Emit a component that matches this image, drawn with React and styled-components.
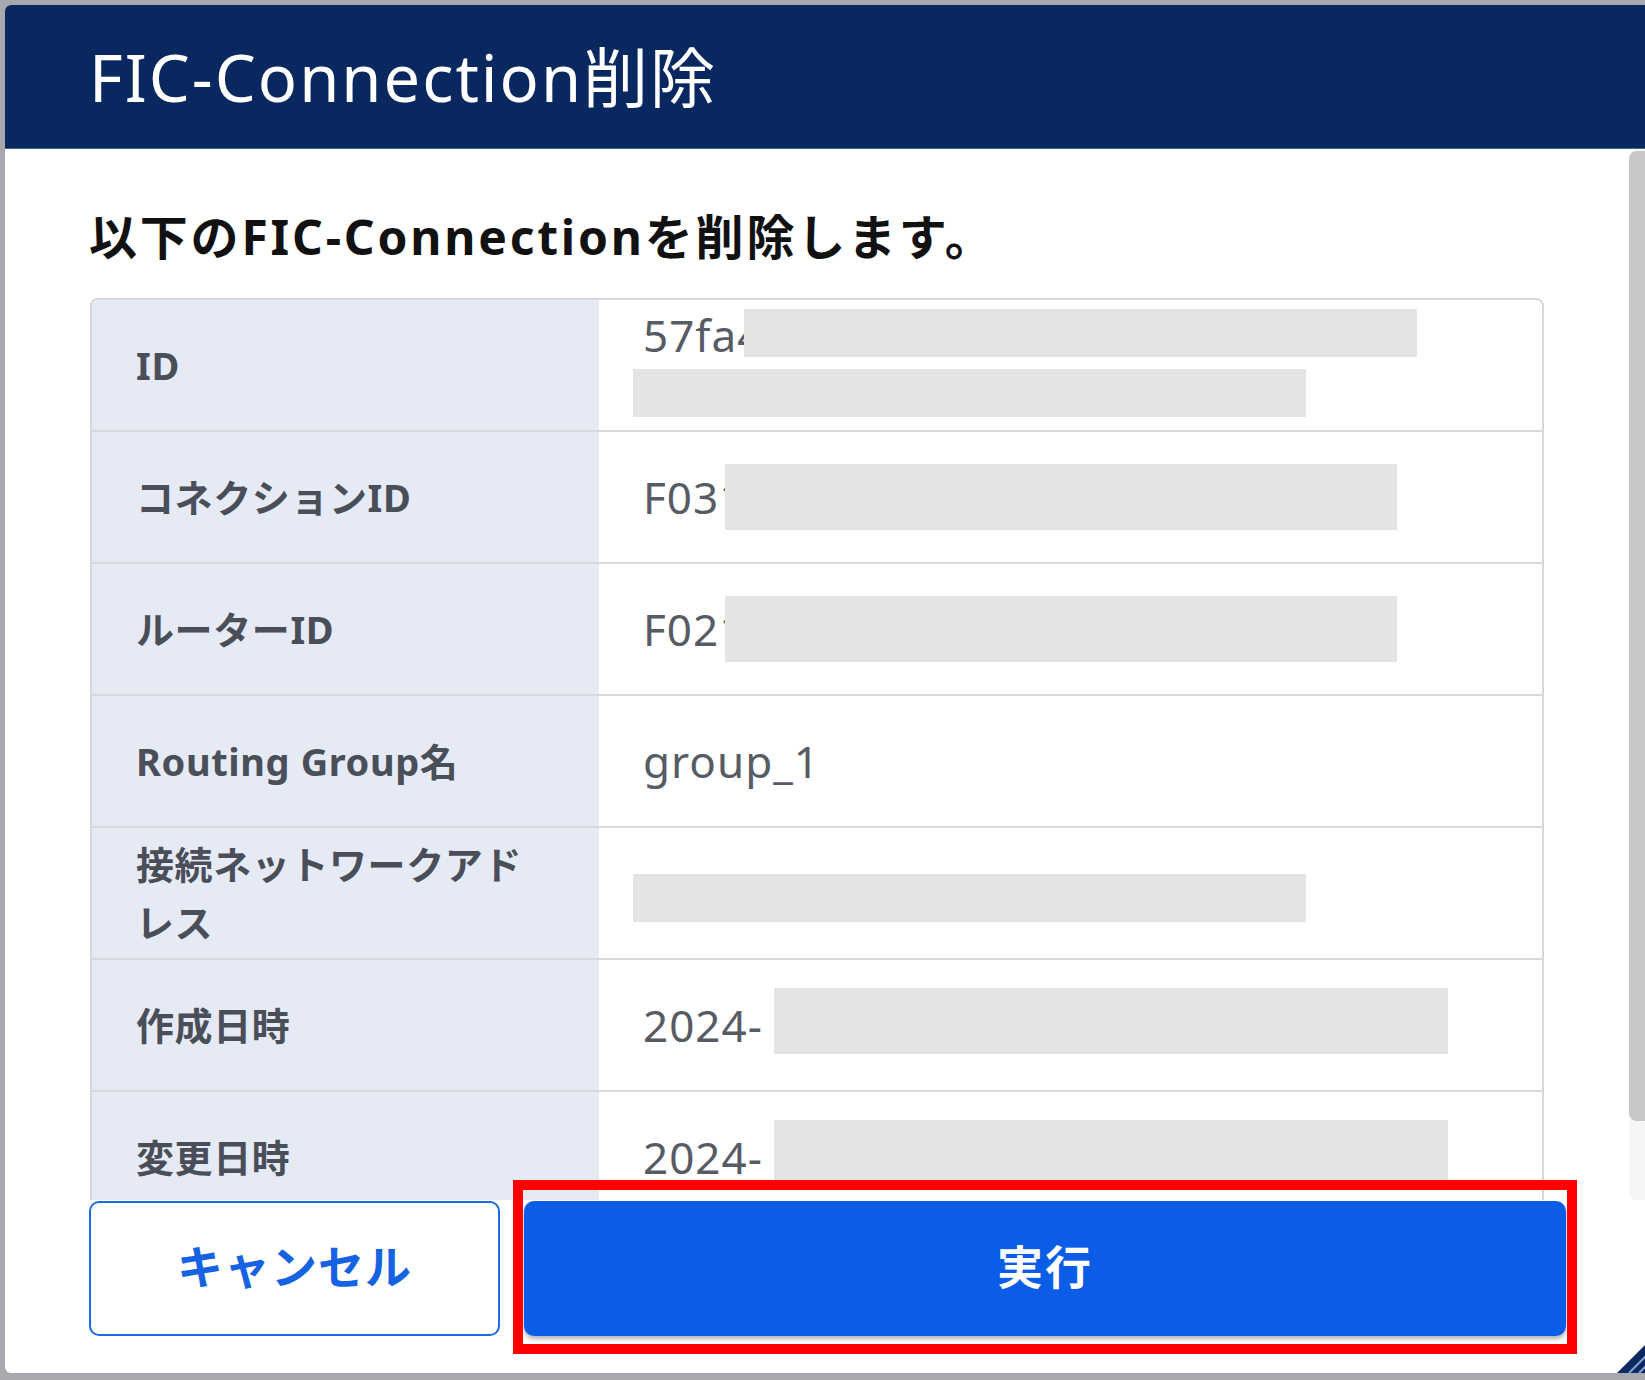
import React from "react";
import styled, { createGlobalStyle } from "styled-components";

const GlobalStyle = createGlobalStyle`
  html, body {
    margin: 0;
    padding: 0;
    background: #a7a9ae;
    overflow: hidden;
  }
  body {
    font-family: "Noto Sans", "Noto Sans CJK JP", sans-serif;
  }
`;

const rows = [
  { label: "ID", kind: "id" },
  { label: "コネクションID", text: "F031", cover: { w: 672, h: 66, shift: -20, mt: 0 } },
  { label: "ルーターID", text: "F021", cover: { w: 672, h: 66, shift: -20, mt: 0 } },
  { label: "Routing Group名", text: "group_1" },
  { label: "接続ネットワークアドレス", text: "", cover: { w: 673, h: 48, shift: -10, mt: 10 } },
  { label: "作成日時", text: "2024-", cover: { w: 674, h: 66, shift: 11, mt: -8 } },
  { label: "変更日時", text: "2024-", cover: { w: 674, h: 66, shift: 11, mt: -8 } },
];

const App = () => {
  return (
    <>
      <GlobalStyle />
      <Page>
        <Dialog>
          <Header>
            <Title>FIC-Connection削除</Title>
          </Header>

          <Body>
            <Content>
              <Lead>以下のFIC-Connectionを削除します。</Lead>
              <Table>
                {rows.map((row) => (
                  <Row key={row.label}>
                    <Label>{row.label}</Label>
                    <Value>
                      {row.kind === "id" ? (
                        <>
                          <Line>
                            57fa4
                            <Redact $w={673} $h={48} $shift={-19} $mt={-4} />
                          </Line>
                          <Line>
                            <Redact $w={673} $h={48} $shift={-10} $mt={-4} />
                          </Line>
                        </>
                      ) : (
                        <Line>
                          {row.text}
                          {row.cover && (
                            <Redact
                              $w={row.cover.w}
                              $h={row.cover.h}
                              $shift={row.cover.shift}
                              $mt={row.cover.mt}
                            />
                          )}
                        </Line>
                      )}
                    </Value>
                  </Row>
                ))}
              </Table>
            </Content>
            <ScrollTrack>
              <ScrollThumb />
            </ScrollTrack>
          </Body>

          <Footer>
            <CancelButton>キャンセル</CancelButton>
            <Highlight>
              <RunButton>実行</RunButton>
            </Highlight>
          </Footer>

          <Grip width="34" height="34" viewBox="0 0 34 34">
            <polygon points="0,34 34,0 34,34" fill="#0b2a62" />
            <line x1="12" y1="34" x2="34" y2="12" stroke="#8aa0c8" strokeWidth="2" />
            <line x1="22" y1="34" x2="34" y2="22" stroke="#8aa0c8" strokeWidth="2" />
          </Grip>
        </Dialog>
      </Page>
    </>
  );
};

export default App;

const Page = styled.div`
  height: 1380px;
  padding: 5px 0 0 5px;
  box-sizing: border-box;
`;

const Dialog = styled.div`
  position: relative;
  width: 1640px;
  height: 1368px;
  background: #ffffff;
  border-radius: 6px 0 0 6px;
  display: flex;
  flex-direction: column;
  overflow: hidden;
`;

const Header = styled.div`
  height: 144px;
  flex-shrink: 0;
  box-sizing: border-box;
  background: #0a2860;
  border-bottom: 1px solid #4a6394;
  display: flex;
  align-items: center;
  padding: 0 0 6px 84px;
`;

const Title = styled.h1`
  margin: 0;
  color: #ffffff;
  font-size: 65px;
  font-weight: 400;
  letter-spacing: 2px;
`;

const Body = styled.div`
  height: 1051px;
  flex-shrink: 0;
  display: flex;
`;

const Content = styled.div`
  flex: 1;
  overflow: hidden;
  padding: 58px 85px 0 85px;
`;

const Lead = styled.p`
  margin: 0 0 31px -1px;
  font-size: 48px;
  line-height: 60px;
  font-weight: 700;
  letter-spacing: 2.8px;
  color: #111111;
`;

const Table = styled.div`
  border: 2px solid #d6d7da;
  border-radius: 8px;
  overflow: hidden;
`;

const Row = styled.div`
  display: grid;
  grid-template-columns: 507px 1fr;
  min-height: 130px;
  border-bottom: 2px solid #d6d8de;
`;

const Label = styled.div`
  background: #e6eaf4;
  padding: 0 50px 0 44px;
  display: flex;
  align-items: center;
  font-size: 38px;
  line-height: 58px;
  font-weight: 700;
  letter-spacing: 0.6px;
  color: #4a4e59;
`;

const Value = styled.div`
  padding: 0 40px 0 44px;
  display: flex;
  flex-direction: column;
  justify-content: center;
  font-size: 44px;
  line-height: 60px;
  letter-spacing: 1px;
  color: #575b64;
`;

const Line = styled.div`
  display: flex;
  align-items: center;
  min-height: 60px;
`;

const Redact = styled.span`
  display: inline-block;
  width: ${(p) => p.$w}px;
  height: ${(p) => p.$h}px;
  margin-left: ${(p) => p.$shift}px;
  margin-top: ${(p) => (p.$mt > 0 ? p.$mt : 0)}px;
  margin-bottom: ${(p) => (p.$mt < 0 ? -p.$mt : 0)}px;
  background: #e4e4e4;
  flex-shrink: 0;
`;

const ScrollTrack = styled.div`
  width: 16px;
  background: #f6f6f6;
  border-radius: 8px 0 0 8px;
  padding-top: 2px;
`;

const ScrollThumb = styled.div`
  height: 970px;
  background: #c8c8c8;
  border-radius: 8px 0 0 8px;
`;

const Footer = styled.div`
  flex: 1;
  display: flex;
  align-items: flex-start;
  gap: 24px;
  padding: 1px 0 0 84px;
`;

const CancelButton = styled.button`
  width: 411px;
  height: 135px;
  box-sizing: border-box;
  padding: 0 0 10px;
  background: #ffffff;
  border: 2px solid #1c6ae4;
  border-radius: 10px;
  color: #1562e2;
  font-family: "Noto Sans CJK JP", sans-serif;
  font-size: 46px;
  font-weight: 700;
  letter-spacing: 1px;
`;

const Highlight = styled.div`
  position: relative;
  display: flex;
  &::after {
    content: "";
    position: absolute;
    top: -21px;
    left: -11px;
    right: -11px;
    bottom: -18px;
    border: 10px solid #ff0000;
    pointer-events: none;
  }
`;

const RunButton = styled.button`
  width: 1042px;
  height: 135px;
  padding: 0 0 10px;
  background: #0b5ce6;
  border: none;
  border-radius: 10px;
  box-shadow: 0 3px 4px rgba(0, 0, 0, 0.3);
  color: #ffffff;
  font-family: "Noto Sans CJK JP", sans-serif;
  font-size: 46px;
  font-weight: 700;
  letter-spacing: 2px;
`;

const Grip = styled.svg`
  position: absolute;
  right: -6px;
  bottom: 0;
`;
